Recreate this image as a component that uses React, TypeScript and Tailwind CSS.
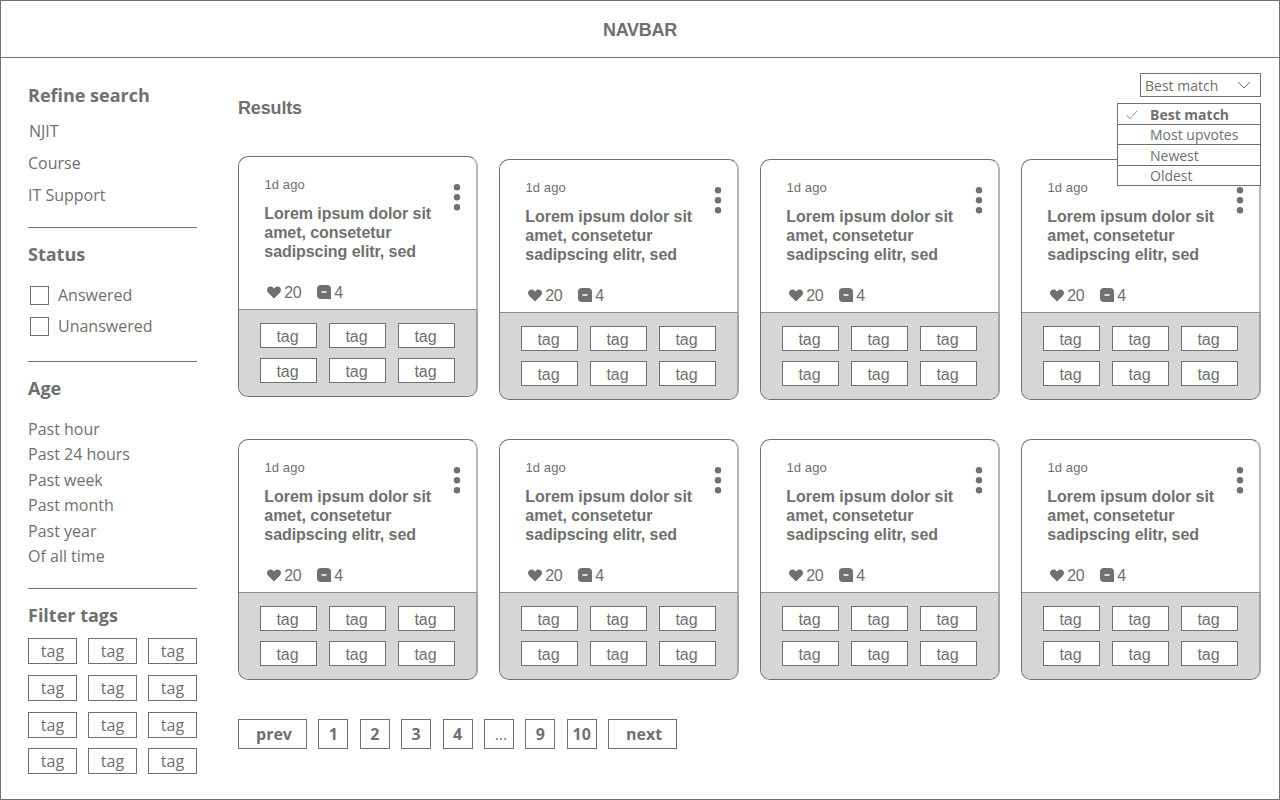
const SCOPES = ["NJIT", "Course", "IT Support"];
const STATUSES = ["Answered", "Unanswered"];
const AGES = ["Past hour", "Past 24 hours", "Past week", "Past month", "Past year", "Of all time"];
const PAGES = ["prev", "1", "2", "3", "4", "...", "9", "10", "next"];
const SORTS = ["Best match", "Most upvotes", "Newest", "Oldest"];

function Heading({ children }: { children: string }) {
  return <h2 className="h-6 text-[18px] leading-6 font-bold">{children}</h2>;
}

function Sidebar() {
  return (
    <aside className="w-[196px] shrink-0 pt-[25px] pl-[27px]">
      <Heading>Refine search</Heading>
      <ul className="mt-2 text-base leading-8">
        {SCOPES.map((s) => (
          <li key={s} className="h-8 first:pl-px">{s}</li>
        ))}
      </ul>
      <hr className="mt-4 border-[#707070]" />
      <div className="mt-[14px]"><Heading>Status</Heading></div>
      <ul className="mt-[14px]">
        {STATUSES.map((s) => (
          <li key={s} className="flex h-[31px] items-center gap-[9px] pl-[2px] text-base">
            <span className="size-[19px] border border-[#707070]" />
            <span className="pb-[2px]">{s}</span>
          </li>
        ))}
      </ul>
      <hr className="mt-[19px] border-[#707070]" />
      <div className="mt-[14px]"><Heading>Age</Heading></div>
      <ul className="mt-[17px] text-base leading-[25.4px]">
        {AGES.map((s) => (
          <li key={s} className="h-[25.4px]">{s}</li>
        ))}
      </ul>
      <hr className="mt-[18.6px] border-[#707070]" />
      <div className="mt-[14px]"><Heading>Filter tags</Heading></div>
      <div className="mt-[11px] grid grid-cols-[49px_49px_49px] gap-x-[11px] gap-y-[10.8px]">
        {Array.from({ length: 12 }, (_, i) => (
          <span key={i} className="flex h-[26px] items-center justify-center border border-[#707070] text-base">tag</span>
        ))}
      </div>
    </aside>
  );
}

function Card({ first }: { first: boolean }) {
  return (
    <article
      className={
        "flex h-[241px] w-[240px] flex-col overflow-hidden rounded-[10px] border border-r-2 border-[#707070] border-r-[#70707080] bg-[linear-gradient(#fff_153px,#d6d6d6_153px)] bg-origin-border font-['Liberation_Sans',Arial,sans-serif] " +
        (first ? "-mt-[3px]" : "")
      }
    >
      <div className="flex h-[152px] shrink-0 justify-between pl-[25px]">
        <div>
          <p className="mt-5 pl-[0.5px] text-[13px] leading-4 tracking-[0.1px]">1d ago</p>
          <h3 className="mt-[11px] pl-[0.3px] text-base leading-[19.2px] font-bold tracking-[-0.06px] whitespace-pre">
            {"Lorem ipsum dolor sit\namet, consetetur\nsadipscing elitr, sed"}
          </h3>
          <div className="mt-[20.4px] flex h-5 items-center pl-[3.4px] text-base tracking-[-0.3px]">
            <svg className="mr-[2.8px]" width="14" height="13" viewBox="0 0 14 13" fill="#707070">
              <path d="M7 12.6 1.2 6.8C-.3 5.2-.3 2.9 1 1.6 2.5.2 5 .3 6.4 1.9L7 2.6l.6-.7C9 .3 11.5.2 13 1.6c1.300 1.300 1.300 3.600-.2 5.200Z" />
            </svg>
            <span className="pt-px">20</span>
            <svg className="mr-[3.500px] ml-[15.300px]" width="14" height="14" viewBox="0 0 14 14">
              <path d="M4 0h6a4 4 0 0 1 4 4v10H4a4 4 0 0 1-4-4V4a4 4 0 0 1 4-4Z" fill="#707070" />
              <path d="M4.500 6.200h5v1.600h-5z" fill="#fff" />
            </svg>
            <span className="pt-px">4</span>
          </div>
        </div>
        <svg className="mt-[26px] mr-[15px]" width="8" height="29" viewBox="0 0 8 29" fill="#707070">
          <circle cx="4" cy="4.200" r="3.200" />
          <circle cx="4" cy="14.200" r="3.200" />
          <circle cx="4" cy="24.200" r="3.200" />
        </svg>
      </div>
      <div className="grid flex-1 grid-cols-[57px_57px_57px] content-start gap-x-3 gap-y-[10px] border-t border-[#8c8c8c] bg-[#d6d6d6] pt-[13px] pl-[21px]">
        {Array.from({ length: 6 }, (_, i) => (
          <span key={i} className="flex h-[25px] items-center justify-center border border-[#707070] bg-white pt-[2px] pr-[2px] text-base leading-5">tag</span>
        ))}
      </div>
    </article>
  );
}

function SortMenu() {
  return (
    <div className="relative mt-[15px] h-6 w-[121px] text-sm">
      <div className="flex h-6 items-center justify-between border border-[#707070] pr-[9px] pl-1">
        <span className="pt-px">Best match</span>
        <svg width="14" height="8" viewBox="0 0 14 8" fill="none" stroke="#707070">
          <path d="m1 1 6 6 6-6" />
        </svg>
      </div>
      <ul className="absolute top-[30px] right-0 z-10 w-[144px] border border-b-0 border-[#707070] bg-white">
        {SORTS.map((s, i) => (
          <li key={s} className="flex h-[20.400px] items-center border-b border-[#707070] leading-5 first:h-[21px] first:pt-px first:font-bold last:pt-px nth-3:pt-px">
            <span className="flex w-8 pl-[8px]">
              {i === 0 && (
                <svg width="12" height="10" viewBox="0 0 12 10" fill="none" stroke="#707070" strokeWidth="0.8">
                  <path d="m.5 5 3.500 3.800L11 1" />
                </svg>
              )}
            </span>
            {s}
          </li>
        ))}
      </ul>
    </div>
  );
}

export default function App() {
  return (
    <div className="flex h-[800px] w-[1280px] flex-col overflow-hidden border border-[#707070] bg-white font-['Open_Sans','Noto_Sans',sans-serif] text-[#707070]">
      <header className="flex h-[57px] shrink-0 items-center justify-center border-b border-[#707070] pt-[2px] font-['Liberation_Sans',Arial,sans-serif] text-[18px] font-bold tracking-[-0.3px]">
        NAVBAR
      </header>
      <div className="flex">
        <Sidebar />
        <main className="ml-[41px] w-[1023px]">
          <div className="flex h-[101px] justify-between">
            <h1 className="mt-[38px] font-['Liberation_Sans',Arial,sans-serif] text-[18px] leading-6 font-bold tracking-[-0.15px]">Results</h1>
            <SortMenu />
          </div>
          <div className="grid grid-cols-[repeat(4,240px)] items-start gap-x-[21px] gap-y-[39px]">
            {Array.from({ length: 8 }, (_, i) => (
              <Card key={i} first={i === 0} />
            ))}
          </div>
          <nav className="mt-[39px] flex gap-[11.400px]">
            {PAGES.map((p) => (
              <span
                key={p}
                className={
                  "flex h-[30px] items-center justify-center border border-[#707070] text-base " +
                  (p === "prev" || p === "next" ? "w-[69px] pl-[3px] font-bold" : p === "..." ? "w-[30px] pl-1" : "w-[30px] font-bold")
                }
              >
                {p}
              </span>
            ))}
          </nav>
        </main>
      </div>
    </div>
  );
}
